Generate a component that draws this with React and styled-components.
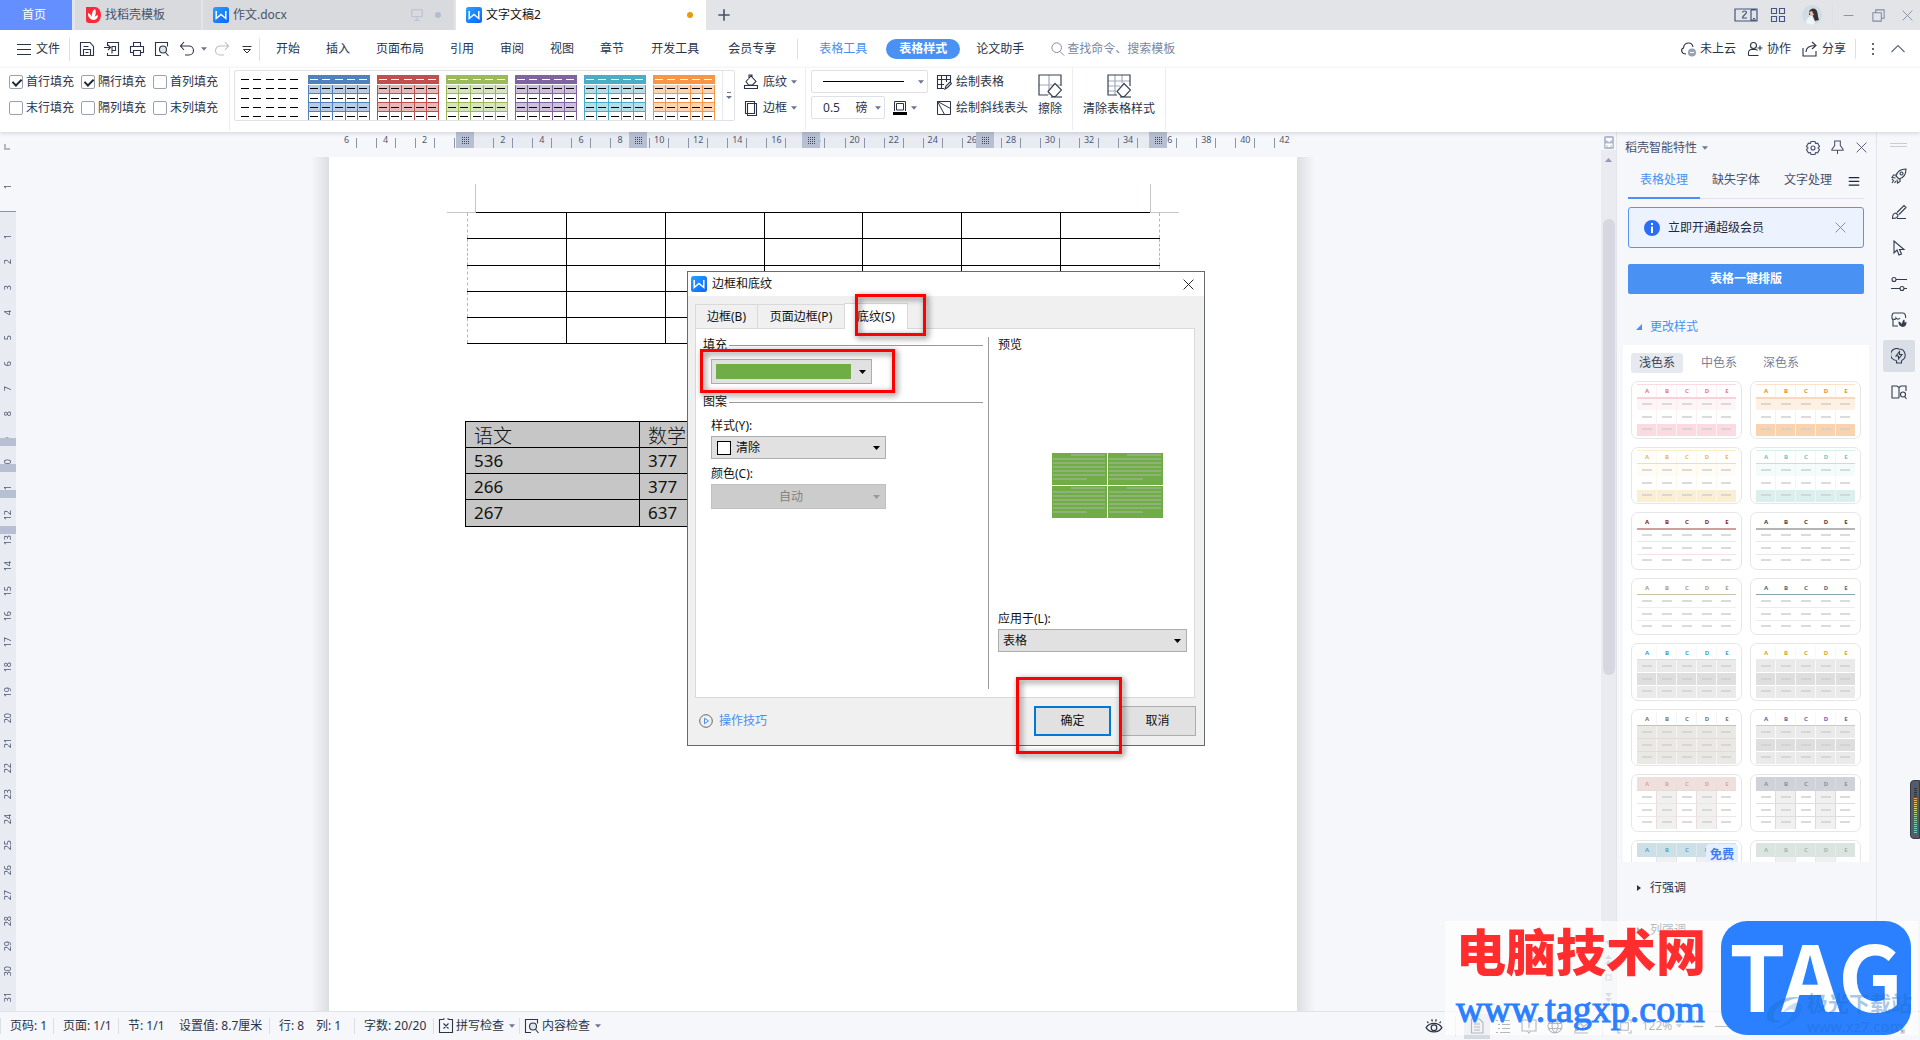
import React from "react";
import styled, { createGlobalStyle } from "styled-components";

const GlobalStyle = createGlobalStyle`
    * {
        box-sizing: border-box;
    }
    body {
        margin: 0;
        overflow: hidden;
        font-family: "Noto Sans", "Noto Sans CJK SC", sans-serif;
        font-size: 12px;
        line-height: 16px;
        color: #2b3347;
        background: #f5f7fa;
    }
    button, input, select {
        font: inherit;
        color: inherit;
        margin: 0;
        padding: 0;
        border: none;
        background: none;
    }
    select {
        appearance: none;
    }
    svg {
        display: block;
        flex: none;
    }
`;

/* ---------- icons ---------- */

const Icon = ({ d, size = 16, width = 1.1, children }) => (
    <svg
        width={size}
        height={size}
        viewBox="0 0 16 16"
        fill="none"
        stroke="currentColor"
        strokeWidth={width}
        aria-hidden="true"
    >
        {d && <path d={d} />}
        {children}
    </svg>
);

const Caret = ({ size = 7, color = "#6b7690" }) => (
    <svg width={size} height="4" viewBox="0 0 7 4" aria-hidden="true">
        <path d="M0 0h7L3.500 4z" fill={color} />
    </svg>
);

const paths = {
    menu: "M1 3.500h14M1 8.500h14M1 13.500h14",
    save: "M1.500 1.500h9.500l3.500 4v9h-13zM4.500 14.500V8.500h7v6M4.500 5.500h5M6.500 11.500h3",
    exportPdf: "M3.500 5V1.500h11v13h-11V12M0 6.500h6M4 4l2.500 2.500L4 9M8 12.500V5.500h3.500v4H8",
    print: "M4.500 5V1.500h7V5M4 11.500H1.500v-6h13v6H12M4.500 9.500h7v5h-7z",
    undo: "M5 1L1.500 5 5 9M1.500 5H10a4.500 4.500 0 010 9H6",
    redo: "M11 1l3.500 4L11 9M14.500 5H6a4.500 4.500 0 000 9h4",
    dropMore: "M3.500 5.500h9M4.500 8.500h7L8 12z",
    plus: "M8 1.500v13M1.500 8h13",
    close: "M2 2l12 12M14 2L2 14",
    minus: "M2 8h12",
    restore: "M5 5V2h9v9h-3M2 5h9v9H2z",
    grid: "M1.500 1.500h5v5h-5zM9.500 1.500h5v5h-5zM1.500 9.500h5v5h-5zM9.500 9.500h5v5h-5z",
    monitor: "M2 2h12v8H2zM8 10v4M5 14h6",
    share: "M1 7v8h13v-5M4 11c0-4 3-6.500 9-6.500M10 1l4 3.500L10 8",
    up: "M1.500 11L8 4.500 14.500 11",
    bucket: "M3 7.500L8 2l5 5.500L9.500 11h-4zM6 5V1h3v3M1.500 11.500h13v3h-13z",
    frame: "M2.500 1.500h9v12h-9zM4.500 3.500h9v12h-9z",
    pin: "M5 1h6v5l3 4v1H2v-1l3-4zM8 11v4",
    brush: "M6 14.500h9M1.500 14.500c0-3.500 1-5.500 3.500-5.500l2 2c0 2.500-2 3.500-5.500 3.500zM6 8.500L13 1.500 15 3.500 8 10.500",
    cursor: "M3 1v12l3-3 2 5 2.500-1-2-4.500H13z",
    list: "M1 2.500h2M5 2.500h10M3 6.500h2M7 6.500h8M3 10.500h2M7 10.500h8M1 14.500h2M5 14.500h10",
    book: "M1 2h5.500L8 3.500 9.500 2H15v11H9.500L8 15l-1.500-2H1zM8 3.500V10M8 11.500v1",
    globe: "M8 1a7 7 0 100 14A7 7 0 008 1zM8 1c-4 4-4 10 0 14M8 1c4 4 4 10 0 14M1.500 5.500h13M1.500 10.500h13",
    write: "M1 15h14M2 13l2-5 8-6 3 3-7 6zM5 9l3 2M8 6l3 3",
    fit: "M1 4V1h3M12 1h3v3M15 12v3h-3M4 15H1v-3M4 4h8v8H4z",
    expand: "M1 5V1h4M11 1h4v4M15 11v4h-4M5 15H1v-4M2 2l4 4M14 2l-4 4M2 14l4-4M14 14l-4-4",
    page: "M2.500 1h8L14 4.500V15H2.500zM5 6h6M5 9h6M5 12h6",
};

const WpsIcon = () => (
    <svg width="16" height="16" viewBox="0 0 16 16" aria-hidden="true">
        <defs>
            <linearGradient id="wps" x1="0" y1="0" x2="1" y2="1">
                <stop offset="0" stopColor="#2aa2ff" />
                <stop offset="1" stopColor="#0a64ff" />
            </linearGradient>
        </defs>
        <rect width="16" height="16" rx="2.500" fill="url(#wps)" />
        <path d="M3.200 4v7.500L8 7.500l4.800 4V4" fill="none" stroke="#fff" strokeWidth="1.500" />
    </svg>
);

const DocerIcon = () => (
    <svg width="16" height="16" viewBox="0 0 16 16" aria-hidden="true">
        <path d="M1 0h9a6 8 0 010 16H4a3 3 0 01-3-3z" fill="#fa2a3a" />
        <path d="M7.500 13C3 11 3 8 3 6c3 1 4 3 4.500 7zM7.500 13C6 8 7 4 10 2c1.500 3 1 7-2.500 11zM8 13c1-3 2-4 5-5 0 3-2 5-5 5z" fill="#fff" />
    </svg>
);

const InspectIcon = ({ size = 16 }) => (
    <Icon size={size} d="M5 14.500H1.500V1.500h12v4M5 14.500h2M11.500 11.500l3 3.500">
        <circle cx="9" cy="8.500" r="3.500" fill="#dfe3ea" />
    </Icon>
);

const EraserGridIcon = ({ dense }) => (
    <svg width="24" height="24" viewBox="0 0 24 24" fill="none" stroke="#3a4256" strokeWidth="1.200" aria-hidden="true">
        <path d={dense ? "M1 7h22M1 12h12M1 17h8M8 1v20M15 1v8" : "M1 11h22M11 1v20"} stroke="#a2a9b8" />
        <path d="M23 12V1H1v20h9" />
        <path d="M17 9.500l6.500 6.500-6 6.500h-3L10 17.500z" fill="#fff" />
        <path d="M13 23h11" />
    </svg>
);

/* ---------- title bar ---------- */

const Shell = styled.div`
    height: 100vh;
    display: flex;
    flex-direction: column;
    position: relative;
    overflow: hidden;
`;

const TitleBar = styled.header`
    display: flex;
    flex: none;
    height: 30px;
    background: #e2e4e8;
`;

const HomeTab = styled.button`
    width: 72px;
    margin-right: 3px;
    padding-right: 4px;
    color: #fff;
    background: #638fff;
`;

const FileTab = styled.button`
    display: flex;
    align-items: center;
    gap: 4px;
    width: ${props => props.$width}px;
    margin-right: 2px;
    padding: 0 10px;
    color: ${props => (props.$active ? "#111" : "#4a5266")};
    background: ${props => (props.$active ? "#fff" : "#d9dade")};
`;

const TabEnd = styled.span`
    display: flex;
    align-items: center;
    gap: 11px;
    margin-left: auto;
    padding-right: 3px;
    color: #b3bdd2;
`;

const Dot = styled.i`
    width: 6px;
    height: 6px;
    border-radius: 50%;
    background: ${props => props.$color};
`;

const PlainButton = styled.button`
    display: flex;
    align-items: center;
    justify-content: center;
    flex: none;
    gap: 4px;
    width: ${props => (props.$width ? `${props.$width}px` : "auto")};
    color: ${props => props.$color || "inherit"};
`;

const Spacer = styled.div`
    flex: 1;
`;

const Divider = styled.i`
    flex: none;
    align-self: center;
    width: 1px;
    height: ${props => props.$height || 20}px;
    margin: 0 ${props => props.$gap || 0}px;
    background: #dcdfe5;
`;

const Gap = styled.i`
    flex: none;
    width: ${props => props.$width}px;
`;

const Titles = () => (
    <TitleBar>
        <HomeTab>首页</HomeTab>
        <FileTab $width={126}>
            <DocerIcon />
            找稻壳模板
        </FileTab>
        <FileTab $width={251}>
            <WpsIcon />
            作文.docx
            <TabEnd>
                <Icon size={14} d={paths.monitor} />
                <Dot $color="#b3bdd2" />
            </TabEnd>
        </FileTab>
        <FileTab $width={250} $active>
            <WpsIcon />
            文字文稿2
            <TabEnd>
                <Dot $color="#e99a0c" />
            </TabEnd>
        </FileTab>
        <PlainButton $width={32} $color="#47506a" aria-label="新建">
            <Icon size={14} width={1.8} d={paths.plus} />
        </PlainButton>
        <Spacer />
        <PlainButton $width={36} $color="#47577c" aria-label="窗口">
            <svg width="24" height="14" viewBox="0 0 24 14" fill="none" stroke="currentColor" strokeWidth="1.200">
                <path d="M1 1h22v12H1zM17 2h5M17 2v10h5M19 10.500h2" />
                <path d="M8.500 4.500c0-2 4-2 4 0 0 1.500-4 3-4 5.500H13" />
            </svg>
        </PlainButton>
        <PlainButton $width={28} $color="#47577c" aria-label="应用">
            <Icon d={paths.grid} />
        </PlainButton>
        <PlainButton $width={40} aria-label="账号">
            <svg width="20" height="20" viewBox="0 0 20 20">
                <circle cx="10" cy="10" r="10" fill="#cfdde3" />
                <path d="M7 7c1-4 6-5 8-1 1 3 1 7 2 9l-4 1-3-7-3 1z" fill="#3b2f36" />
                <path d="M7 7l3-1 2 4-3 1z" fill="#e8bfae" />
                <path d="M4 18c0-4 3-7 6-7l3 8c-3 1-6 1-9-1z" fill="#eef5f8" />
            </svg>
        </PlainButton>
        <Divider $height={20} />
        <PlainButton $width={30} $color="#7d8aa8" aria-label="最小化">
            <Icon size={13} d={paths.minus} />
        </PlainButton>
        <PlainButton $width={31} $color="#7d8aa8" aria-label="还原">
            <Icon size={15} d={paths.restore} />
        </PlainButton>
        <PlainButton $width={26} $color="#7d8aa8" aria-label="关闭">
            <Icon size={13} d={paths.close} />
        </PlainButton>
    </TitleBar>
);

/* ---------- menu row ---------- */

const MenuBar = styled.nav`
    display: flex;
    align-items: center;
    flex: none;
    height: 38px;
    padding: 0 14px 0 16px;
    background: #fff;
`;

const MenuTab = styled.button`
    flex: none;
    padding: 0 13px;
    color: ${props => (props.$blue ? "#4a8ef0" : "#2b3347")};
`;

const Pill = styled.button`
    height: 20px;
    margin: 0 3px 0 6px;
    padding: 0 13px;
    border-radius: 10px;
    font-weight: bold;
    color: #fff;
    background: #4991f2;
`;

const SearchBox = styled.label`
    display: flex;
    align-items: center;
    gap: 2px;
    margin-left: 14px;
    color: #7c879e;

    input {
        width: 140px;
        outline: none;
    }
    input::placeholder {
        color: #7c879e;
        opacity: 1;
    }
`;

const tabNames = ["开始", "插入", "页面布局", "引用", "审阅", "视图", "章节"];

const Menu = () => (
    <MenuBar>
        <PlainButton>
            <Icon d={paths.menu} />
            文件
        </PlainButton>
        <Gap $width={9} />
        <Divider $height={23} />
        <Gap $width={4} />
        <PlainButton $width={25} aria-label="保存"><Icon d={paths.save} /></PlainButton>
        <PlainButton $width={25} aria-label="输出为PDF"><Icon d={paths.exportPdf} /></PlainButton>
        <PlainButton $width={25} aria-label="打印"><Icon d={paths.print} /></PlainButton>
        <PlainButton $width={25} aria-label="打印预览"><InspectIcon /></PlainButton>
        <PlainButton $width={25} aria-label="撤销"><Icon d={paths.undo} /></PlainButton>
        <PlainButton $width={10} aria-label="撤销列表"><Caret size={6} /></PlainButton>
        <PlainButton $width={25} $color="#b9bdc6" aria-label="恢复"><Icon d={paths.redo} /></PlainButton>
        <PlainButton $width={25} aria-label="更多"><Icon width={1} d={paths.dropMore} /></PlainButton>
        <Divider $height={23} />
        <Gap $width={3} />
        {tabNames.map(name => (
            <MenuTab key={name}>{name}</MenuTab>
        ))}
        <Gap $width={1} />
        <MenuTab>开发工具</MenuTab>
        <Gap $width={3} />
        <MenuTab>会员专享</MenuTab>
        <Divider $gap={8} />
        <MenuTab $blue>表格工具</MenuTab>
        <Pill>表格样式</Pill>
        <MenuTab>论文助手</MenuTab>
        <SearchBox>
            <Icon size={14} d="M10.500 11l4.500 4.500">
                <circle cx="6.500" cy="6.500" r="5.500" />
            </Icon>
            <input placeholder="查找命令、搜索模板" aria-label="查找命令" />
        </SearchBox>
        <Spacer />
        <PlainButton>
            <Icon d="M6 13C1 13 .500 8 3.500 7 4 1 12 0 13 6">
                <circle cx="12" cy="11.500" r="4" fill="#97a1b5" stroke="none" />
                <path d="M10 11.500h4" stroke="#fff" />
            </Icon>
            未上云
        </PlainButton>
        <Gap $width={11} />
        <PlainButton>
            <Icon d="M1.500 14.500v-3a3 3 0 013-3h4a3 3 0 012 1M1.500 14.500h10M10.500 7h5M13 4.500v5">
                <circle cx="6.500" cy="4.500" r="3" />
            </Icon>
            协作
        </PlainButton>
        <Gap $width={11} />
        <PlainButton>
            <Icon d={paths.share} />
            分享
        </PlainButton>
        <Divider $gap={9} />
        <PlainButton $width={16} aria-label="更多选项">
            <Icon>
                <g fill="#5c6780" stroke="none">
                    <rect x="7" y="2" width="2" height="2" />
                    <rect x="7" y="7" width="2" height="2" />
                    <rect x="7" y="12" width="2" height="2" />
                </g>
            </Icon>
        </PlainButton>
        <Gap $width={9} />
        <PlainButton $width={16} $color="#5c6780" aria-label="收起功能区">
            <Icon d={paths.up} />
        </PlainButton>
    </MenuBar>
);

/* ---------- ribbon ---------- */

const Ribbon = styled.section`
    display: flex;
    flex: none;
    position: relative;
    z-index: 1;
    height: 64px;
    padding: 0 9px;
    background: #fff;
    box-shadow: 0 1px 4px rgba(40, 50, 70, 0.18);
`;

const FillOptions = styled.div`
    display: grid;
    grid-template-columns: repeat(3, 72px);
    grid-auto-rows: 26px;
    width: 220px;
    padding-top: 1px;
`;

const CheckLabel = styled.label`
    display: flex;
    align-items: center;
    gap: 3px;
    white-space: nowrap;

    input {
        appearance: none;
        width: 14px;
        height: 14px;
        border: 1px solid #9aa1af;
        border-radius: 2px;
        background: #fff;
    }
    input:checked::after {
        content: "";
        display: block;
        width: 4px;
        height: 7px;
        margin: 1px 0 0 4px;
        border: solid #1f2738;
        border-width: 0 2px 2px 0;
        transform: rotate(45deg);
    }
`;

const Gallery = styled.div`
    display: flex;
    gap: 7px;
    height: 51px;
    margin: 2px 8px 0 4px;
    padding: 4px 0 0 4px;
    border: 1px solid #dfe1e6;
    border-radius: 2px;
    overflow: hidden;
`;

const GalleryMore = styled.button`
    display: flex;
    align-items: center;
    justify-content: center;
    width: 12px;
    margin-top: -4px;
    border-left: 1px solid #e6e8ec;
`;

const TableThumb = ({ color, tint }) => (
    <svg width="62" height="46" viewBox="0 0 62 46" shapeRendering="crispEdges" aria-hidden="true">
        {color && (
            <g>
                <rect width="62" height="9" fill={color} />
                <rect y="10" width="62" height="9" fill={tint} />
                <rect y="28" width="62" height="8" fill={tint} />
                <path d="M0 18.500h62M0 27.500h62M0 36.500h62" stroke={color} />
                <path d="M.500 10v36M12.500 10v36M24.500 10v36M37.500 10v36M49.500 10v36M61.500 10v36" stroke={color} />
            </g>
        )}
        {[4, 13, 23, 32, 41].map((y, row) =>
            [2, 14, 27, 39, 51].map(x => (
                <rect key={`${x}-${y}`} x={x} y={y} width="8" height="1" fill={color && row === 0 ? "#fff" : "#000"} />
            ))
        )}
    </svg>
);

const Stack = styled.div`
    display: flex;
    flex-direction: column;
    gap: ${props => props.$gap || 10}px;
    padding: ${props => props.$pad || "6px 8px 0 0"};
`;

const ToolButton = styled.button`
    display: flex;
    align-items: center;
    gap: 4px;
    height: 16px;
    white-space: nowrap;
`;

const BigTool = styled.button`
    display: flex;
    flex-direction: column;
    align-items: center;
    justify-content: flex-start;
    gap: 3px;
    padding: 6px 10px 0;
    height: 58px;
`;

const Row = styled.div`
    display: flex;
    align-items: center;
    gap: 8px;
`;

const RibbonSelect = styled.label`
    display: grid;
    align-items: center;
    width: ${props => props.$width}px;
    height: 23px;
    border: 1px solid #dfe1e6;
    border-radius: 2px;

    > * {
        grid-area: 1 / 1;
    }
    > select {
        width: 100%;
        height: 100%;
        padding-left: 11px;
        outline: none;
    }
    > svg {
        justify-self: end;
        margin-right: 3px;
        pointer-events: none;
    }
    > hr {
        width: 81px;
        margin: 0 0 0 11px;
        border: none;
        border-top: 1px solid #000;
    }
`;

const RibbonDivider = styled.i`
    width: 1px;
    height: 62px;
    margin-right: ${props => props.$after || 0}px;
    background: #ebedf0;
`;

const tableColors = [
    [null, null],
    ["#4f81bd", "#b8cce4"],
    ["#c0504d", "#e6b8b7"],
    ["#9bbb59", "#d8e4bc"],
    ["#8064a2", "#ccc0da"],
    ["#4bacc6", "#b7dee8"],
    ["#f79646", "#fcd5b4"],
];

const fillOptions = [
    ["首行填充", true],
    ["隔行填充", true],
    ["首列填充", false],
    ["末行填充", false],
    ["隔列填充", false],
    ["末列填充", false],
];

const Tools = () => (
    <Ribbon>
        <FillOptions>
            {fillOptions.map(([name, on]) => (
                <CheckLabel key={name}>
                    <input type="checkbox" defaultChecked={on} />
                    {name}
                </CheckLabel>
            ))}
        </FillOptions>
        <RibbonDivider />
        <Gallery>
            {tableColors.map(([color, tint]) => (
                <TableThumb key={color} color={color} tint={tint} />
            ))}
            <GalleryMore aria-label="更多样式">
                <svg width="6" height="8" viewBox="0 0 6 8">
                    <path d="M1 0h4v1H1zM0 4h6L3 7z" fill="#6b7690" />
                </svg>
            </GalleryMore>
        </Gallery>
        <Stack>
            <ToolButton>
                <Icon d={paths.bucket} />
                底纹
                <Caret size={6} />
            </ToolButton>
            <ToolButton>
                <Icon d={paths.frame} />
                边框
                <Caret size={6} />
            </ToolButton>
        </Stack>
        <RibbonDivider $after={5} />
        <Stack $gap={3} $pad="2px 8px 0 0">
            <RibbonSelect $width={117}>
                <select aria-label="线型" />
                <hr />
                <Caret size={6} />
            </RibbonSelect>
            <Row>
                <RibbonSelect $width={74}>
                    <select aria-label="线宽">
                        <option>0.5&nbsp;&nbsp;&nbsp;&nbsp;&nbsp;磅</option>
                    </select>
                    <Caret size={6} />
                </RibbonSelect>
                <ToolButton aria-label="边框颜色">
                    <svg width="14" height="15" viewBox="0 0 14 15">
                        <path d="M1.500 11V1.500h11V11M3.500 10V3.500h7V10z" fill="none" stroke="#2b3347" />
                        <rect y="12" width="14" height="3" />
                    </svg>
                    <Caret size={6} />
                </ToolButton>
            </Row>
        </Stack>
        <Stack $pad="6px 0 0 0">
            <ToolButton>
                <Icon d="M8 14.500H1.500v-13h13V8M1.500 5.500h13M1.500 10.500H8M5.500 1v14M10.500 1v7M9 15l1-3 4-4 1.500 1.500-4 4z" />
                绘制表格
            </ToolButton>
            <ToolButton>
                <Icon width={1} d="M1.500 1.500h13v13h-13zM1.500 1.500l13 7M1.500 1.500l7 13" />
                绘制斜线表头
            </ToolButton>
        </Stack>
        <BigTool>
            <EraserGridIcon />
            擦除
        </BigTool>
        <RibbonDivider />
        <BigTool>
            <EraserGridIcon dense />
            清除表格样式
        </BigTool>
        <RibbonDivider />
    </Ribbon>
);

/* ---------- document area ---------- */

const Workspace = styled.main`
    display: flex;
    flex: 1;
    min-height: 0;
`;

const DocColumn = styled.div`
    display: flex;
    flex-direction: column;
    flex: 1;
    min-width: 0;
`;

const RulerRow = styled.div`
    display: flex;
    justify-content: center;
    flex: none;
    height: 25px;
    padding-left: 25px;
    font-size: 9px;
    line-height: 15px;
    color: #4d5870;
`;

const RulerTrack = styled.div`
    display: grid;
    grid-template-columns: repeat(25, 1fr);
    position: relative;
    width: 1004px;
    height: 16px;
    padding: 0 11px 0 16px;
    background: linear-gradient(#e8ebf1, #e8ebf1) 146px 0 / 710px 16px no-repeat;
`;

const RulerCell = styled.span`
    display: flex;
    justify-content: center;
    align-items: flex-start;

    &::before,
    &::after {
        content: "";
        flex: none;
        width: 1px;
        height: 10px;
        margin-top: 6px;
        background: #8a94aa;
    }
    &:first-child::before,
    &:nth-child(25)::after {
        background: none;
    }
    b {
        width: 18px;
        font-weight: normal;
        text-align: center;
    }
`;

const ColumnStop = styled.i`
    position: absolute;
    top: 0;
    left: ${props => props.$left}px;
    width: 18px;
    height: 16px;
    padding: 4px 5px;
    background: #b7bfd2;

    &::after {
        content: "";
        display: block;
        width: 8px;
        height: 8px;
        background: repeating-linear-gradient(90deg, #b7bfd2 0 1px, transparent 1px 2px),
            repeating-linear-gradient(#b7bfd2 0 1px, #3d465c 1px 2px);
    }
`;

const DocRow = styled.div`
    display: flex;
    flex: 1;
    min-height: 0;
`;

const SideRuler = styled.div`
    display: flex;
    flex-direction: column;
    flex: none;
    width: 16px;
    font-size: 9px;
    line-height: 16px;
    color: #4d5870;
`;

const SideRulerTop = styled.div`
    display: flex;
    align-items: center;
    justify-content: center;
    height: 55px;
    padding-top: 6px;
    border-bottom: 1px solid #8a94aa;
`;

const SideRulerBody = styled.div`
    display: grid;
    grid-auto-rows: 1fr;
    flex: 1;
    position: relative;
    padding: 12px 0 1px;
    background: #e8ebf1;
`;

const SideNumber = styled.span`
    display: flex;
    align-items: center;
    justify-content: center;
    min-height: 0;
    writing-mode: vertical-rl;
    transform: rotate(180deg);
`;

const RowStop = styled.i`
    position: absolute;
    left: 0;
    top: ${props => props.$top}px;
    width: 16px;
    height: 8px;
    background: #b7bfd2;
`;

const TabCorner = styled.i`
    position: absolute;
    left: 4px;
    top: 144px;
    width: 6px;
    height: 6px;
    border: solid #b3b7c0;
    border-width: 0 0 2px 2px;
`;

const Canvas = styled.div`
    display: flex;
    justify-content: center;
    flex: 1;
    min-width: 0;
    padding-left: 9px;
`;

const PageFrame = styled.div`
    flex: none;
    padding: 0 18px;
    background: linear-gradient(90deg, transparent, #dcdee1) left / 18px 100% no-repeat,
        linear-gradient(270deg, transparent, #dcdee1) right / 18px 100% no-repeat;
`;

const Page = styled.article`
    position: relative;
    width: 968px;
    height: 100%;
    padding: 27px 118px 0;
    background: #fff;
`;

const Margins = styled.div`
    display: flex;
    justify-content: space-between;
    height: 28px;

    i {
        width: 29px;
        border: solid #c4c6ca;
        border-width: 0 1px 1px 0;
        height: 29px;
    }
    i + i {
        border-width: 0 0 1px 1px;
    }
`;

const BlankTable = styled.table`
    width: 693px;
    margin: 0 0 77px 20px;
    border-collapse: collapse;
    table-layout: fixed;
    border-left: 1px dashed #b8b8b8;
    border-right: 1px dashed #b8b8b8;

    td {
        height: 26px;
        padding: 0;
        border: solid #000;
        border-width: 1px 0;
    }
    tr:nth-child(2) td {
        height: 27px;
    }
    td + td {
        border-left-width: 1px;
    }
`;

const ScoreTable = styled.table`
    width: 697px;
    margin-left: 18px;
    border-collapse: collapse;
    table-layout: fixed;
    font-size: 17px;
    line-height: 24px;
    color: #111;
    background: #c6c6c6;

    th,
    td {
        height: 26px;
        padding: 0 0 0 8px;
        border: 1px solid #000;
        text-align: left;
    }
    th {
        font-size: 19px;
        font-weight: 300;
        font-family: "Noto Sans CJK SC", sans-serif;
    }
    tr:last-child td {
        height: 27px;
    }
`;

const ScrollColumn = styled.div`
    display: flex;
    flex-direction: column;
    align-items: center;
    flex: none;
    width: 15px;
    padding-top: 4px;
`;

const ScrollTrack = styled.div`
    display: flex;
    flex-direction: column;
    align-items: center;
    flex: 1;
    width: 15px;
    margin-top: 1px;
    padding: 8px 0 6px;
    color: #8f9ab3;
    background: #e9ebf0;
`;

const Thumb = styled.div`
    width: 12px;
    height: 456px;
    margin: 57px 0 auto;
    border-radius: 6px;
    background: #d5d8e0;
`;

const scores = [
    ["536", "377"],
    ["266", "377"],
    ["267", "637"],
];

const rulerNumbers = Array.from({ length: 25 }, (_, i) => Math.abs(i * 2 - 6));
const rowNumbers = Array.from({ length: 31 }, (_, i) => i + 1);

/* ---------- borders and shading dialog ---------- */

const Dialog = styled.section`
    position: absolute;
    left: 358px;
    top: 114px;
    display: flex;
    flex-direction: column;
    width: 518px;
    height: 475px;
    border: 1px solid #666a70;
    color: #111;
    background: #f0f0f0;
`;

const DialogTitle = styled.header`
    display: flex;
    align-items: center;
    gap: 5px;
    flex: none;
    height: 24px;
    padding: 0 9px 0 3px;
    background: #fff;

    button {
        margin-left: auto;
    }
`;

const DialogTabs = styled.div`
    display: flex;
    align-items: flex-end;
    flex: none;
    height: 33px;
    padding-left: 7px;
    margin-bottom: -1px;
    z-index: 1;
`;

const DialogTab = styled.button`
    width: ${props => props.$width}px;
    height: ${props => (props.$active ? 26 : 24)}px;
    margin-bottom: ${props => (props.$active ? 0 : 1)}px;
    margin-right: -1px;
    border: 1px solid #d9d9d9;
    border-bottom: none;
    background: ${props => (props.$active ? "#fff" : "#f0f0f0")};
`;

const DialogBody = styled.div`
    display: flex;
    flex: none;
    height: 370px;
    margin: 0 9px 0 7px;
    padding: 8px 0;
    border: 1px solid #d9d9d9;
    background: #fff;
`;

const ShadingPane = styled.div`
    flex: none;
    width: 293px;
    padding: 0 5px 0 7px;
    border-right: 1px solid #9a9a9a;
`;

const PreviewPane = styled.div`
    display: flex;
    flex-direction: column;
    flex: 1;
    padding: 0 6px 30px 9px;
`;

const GroupTitle = styled.h3`
    display: flex;
    align-items: center;
    gap: 2px;
    margin: 0;
    font-size: 12px;
    font-weight: normal;

    &::after {
        content: "";
        flex: 1;
        height: 1px;
        background: ${props => (props.$plain ? "none" : "#9a9a9a")};
    }
`;

const Group = styled.div`
    padding: ${props => props.$pad};
`;

const FieldLabel = styled.label`
    display: block;
    margin-bottom: 2px;
`;

const Field = styled.div`
    display: grid;
    align-items: center;
    width: ${props => props.$width}px;
    height: ${props => props.$height || 23}px;
    margin-bottom: 7px;
    border: 1px solid ${props => (props.$disabled ? "#c0c0c0" : "#adadad")};
    color: ${props => (props.$disabled ? "#838383" : "#111")};
    background: ${props => (props.$disabled ? "#cccccc" : "#e1e1e1")};

    > * {
        grid-area: 1 / 1;
    }
    select {
        width: 100%;
        height: 100%;
        padding-left: ${props => props.$indent || 4}px;
        outline: none;
        opacity: 1;
    }
    > svg {
        justify-self: end;
        margin-right: 5px;
        pointer-events: none;
    }
`;

const Swatch = styled.i`
    width: ${props => (props.$small ? 14 : 135)}px;
    height: ${props => (props.$small ? 14 : 15)}px;
    margin-left: ${props => (props.$small ? 5 : 4)}px;
    border: ${props => (props.$small ? "1px solid #000" : "none")};
    background: ${props => props.$color};
    pointer-events: none;
`;

const Preview = styled.svg`
    align-self: flex-end;
    margin: 100px 24px auto 0;
`;

const DialogFooter = styled.footer`
    display: flex;
    align-items: center;
    gap: 8px;
    padding: 8px 8px 0 11px;
`;

const TipLink = styled.a`
    display: flex;
    align-items: center;
    gap: 6px;
    margin-right: auto;
    color: #4a8ef0;
    text-decoration: none;
`;

const DialogButton = styled.button`
    width: 77px;
    height: 30px;
    border: ${props => (props.$primary ? "2px solid #0078d7" : "1px solid #adadad")};
    background: #e1e1e1;
`;

const RedBox = styled.i`
    position: absolute;
    left: ${props => props.$left}px;
    top: ${props => props.$top}px;
    width: ${props => props.$width}px;
    height: ${props => props.$height}px;
    border: 3px solid #f00;
    filter: drop-shadow(2px 2px 3px rgba(0, 0, 0, 0.6));
    pointer-events: none;
    z-index: 2;
`;

const PreviewCell = ({ x, y }) => (
    <g transform={`translate(${x} ${y})`}>
        <rect width="55" height="32" fill="#70ad47" />
        <path d="M19 2h34M1 6h52M1 10h52M1 14h52M1 18h52M1 22h52M1 26h34" stroke="#8fb377" strokeWidth="2" />
    </g>
);

const BordersDialog = () => (
    <Dialog role="dialog" aria-label="边框和底纹">
        <DialogTitle>
            <WpsIcon />
            边框和底纹
            <PlainButton $width={13} aria-label="关闭">
                <Icon size={13} d={paths.close} />
            </PlainButton>
        </DialogTitle>
        <DialogTabs>
            <DialogTab $width={63}>边框(B)</DialogTab>
            <DialogTab $width={88}>页面边框(P)</DialogTab>
            <DialogTab $width={64} $active>底纹(S)</DialogTab>
        </DialogTabs>
        <DialogBody>
            <ShadingPane>
                <GroupTitle>填充</GroupTitle>
                <Group $pad="6px 8px 3px">
                    <Field $width={161} $height={25}>
                        <select aria-label="填充" />
                        <Swatch $color="#70ad47" />
                        <Caret color="#000" />
                    </Field>
                </Group>
                <GroupTitle>图案</GroupTitle>
                <Group $pad="8px 8px 0">
                    <FieldLabel htmlFor="pattern">样式(Y):</FieldLabel>
                    <Field $width={175} $indent={24}>
                        <select id="pattern">
                            <option>清除</option>
                        </select>
                        <Swatch $small $color="#fff" />
                        <Caret color="#000" />
                    </Field>
                    <FieldLabel htmlFor="tone">颜色(C):</FieldLabel>
                    <Field $width={175} $height={25} $indent={67} $disabled>
                        <select id="tone" disabled>
                            <option>自动</option>
                        </select>
                        <Caret color="#9a9a9a" />
                    </Field>
                </Group>
            </ShadingPane>
            <PreviewPane>
                <GroupTitle $plain>预览</GroupTitle>
                <Preview width="112" height="65" viewBox="0 0 112 65">
                    <PreviewCell x={0} y={0} />
                    <PreviewCell x={56} y={0} />
                    <PreviewCell x={0} y={33} />
                    <PreviewCell x={56} y={33} />
                </Preview>
                <FieldLabel htmlFor="applyTo">应用于(L):</FieldLabel>
                <Field $width={189}>
                    <select id="applyTo">
                        <option>表格</option>
                    </select>
                    <Caret color="#000" />
                </Field>
            </PreviewPane>
        </DialogBody>
        <DialogFooter>
            <TipLink href="#tips">
                <svg width="14" height="14" viewBox="0 0 14 14" fill="none">
                    <circle cx="7" cy="7" r="6.300" stroke="#666" />
                    <path d="M5.500 4.200L9.500 7l-4 2.800z" stroke="#4a8ef0" />
                </svg>
                操作技巧
            </TipLink>
            <DialogButton $primary>确定</DialogButton>
            <DialogButton>取消</DialogButton>
        </DialogFooter>
        <RedBox $left={167} $top={22} $width={71} $height={42} />
        <RedBox $left={12} $top={77} $width={195} $height={44} />
        <RedBox $left={328} $top={405} $width={106} $height={77} />
    </Dialog>
);

const DocumentArea = () => (
    <>
        <DocColumn>
            <RulerRow>
                <RulerTrack>
                    {rulerNumbers.map((n, i) => (
                        <RulerCell key={i}>
                            <b>{n || ""}</b>
                        </RulerCell>
                    ))}
                    {[145, 318, 491, 665, 838].map(left => (
                        <ColumnStop key={left} $left={left} />
                    ))}
                </RulerTrack>
            </RulerRow>
            <DocRow>
                <SideRuler>
                    <SideRulerTop>
                        <SideNumber>1</SideNumber>
                    </SideRulerTop>
                    <SideRulerBody>
                        {rowNumbers.map(n => (
                            <SideNumber key={n}>{n}</SideNumber>
                        ))}
                        {[226, 252, 278, 314].map(top => (
                            <RowStop key={top} $top={top} />
                        ))}
                    </SideRulerBody>
                </SideRuler>
                <Canvas>
                    <PageFrame>
                        <Page>
                            <Margins>
                                <i />
                                <i />
                            </Margins>
                            <BlankTable>
                                <tbody>
                                    {[0, 1, 2, 3, 4].map(row => (
                                        <tr key={row}>
                                            {[0, 1, 2, 3, 4, 5, 6].map(col => (
                                                <td key={col} />
                                            ))}
                                        </tr>
                                    ))}
                                </tbody>
                            </BlankTable>
                            <ScoreTable>
                                <thead>
                                    <tr>
                                        <th>语文</th>
                                        <th>数学</th>
                                        <th />
                                        <th />
                                    </tr>
                                </thead>
                                <tbody>
                                    {scores.map(([a, b]) => (
                                        <tr key={a}>
                                            <td>{a}</td>
                                            <td>{b}</td>
                                            <td />
                                            <td />
                                        </tr>
                                    ))}
                                </tbody>
                            </ScoreTable>
                            <BordersDialog />
                        </Page>
                    </PageFrame>
                </Canvas>
            </DocRow>
        </DocColumn>
        <ScrollColumn>
            <svg width="10" height="13" viewBox="0 0 10 13">
                <rect width="10" height="13" rx="1.500" fill="#b3bbd0" />
                <path d="M2 2h6v2L5 6 2 4zM1.500 7.500h7V11h-1V9h-1v2h-3V9h-1v2h-1z" fill="#fff" />
            </svg>
            <ScrollTrack>
                <svg width="7" height="4" viewBox="0 0 7 4">
                    <path d="M0 4h7L3.500 0z" fill="currentColor" />
                </svg>
                <Thumb />
                <svg width="7" height="64" viewBox="0 0 7 64" fill="currentColor">
                    <path d="M0 0h7L3.500 4zM0 18h7L3.500 14zM0 23h7L3.500 19zM0 52h7L3.500 56zM0 57h7L3.500 61z" />
                    <rect x="1" y="34" width="5" height="5" fill="none" stroke="currentColor" />
                </svg>
            </ScrollTrack>
        </ScrollColumn>
    </>
);

/* ---------- side panel ---------- */

const Panel = styled.aside`
    flex: none;
    width: 260px;
    border-left: 1px solid #e2e4ea;
    color: #47506a;
`;

const PanelHeader = styled.header`
    display: flex;
    align-items: center;
    height: 31px;
    padding: 0 6px 0 8px;
    gap: 5px;
`;

const PanelTabs = styled.div`
    display: flex;
    align-items: stretch;
    height: 36px;
    margin: 0 12px 8px 11px;
    border-bottom: 1px solid #e0e3e9;
`;

const PanelTab = styled.button`
    width: 72px;
    margin-bottom: -1px;
    border-bottom: 2px solid ${props => (props.$active ? "#4991f2" : "transparent")};
    color: ${props => (props.$active ? "#4991f2" : "#47506a")};
`;

const Banner = styled.div`
    display: flex;
    align-items: center;
    gap: 8px;
    height: 41px;
    margin: 0 12px 16px 11px;
    padding: 0 16px 0 15px;
    border: 1px solid #5a93f5;
    border-radius: 3px;
    color: #1f2738;
    background: #edf3fe;
`;

const WideButton = styled.button`
    display: block;
    width: 236px;
    height: 30px;
    margin: 0 0 20px 11px;
    border-radius: 2px;
    font-weight: bold;
    color: #fff;
    background: #4991f2;
`;

const Section = styled.button`
    display: flex;
    align-items: center;
    gap: 8px;
    height: ${props => props.$height}px;
    margin-bottom: ${props => props.$after || 0}px;
    padding-left: 19px;
    color: ${props => props.$color};
`;

const StyleBox = styled.div`
    height: 517px;
    margin: 0 7px 5px 6px;
    padding: 8px 8px 0;
    overflow: hidden;
    background: #fff;
`;

const ToneTabs = styled.div`
    display: flex;
    gap: 10px;
    margin-bottom: 8px;
`;

const ToneTab = styled.button`
    width: 52px;
    height: 20px;
    border-radius: 3px;
    color: ${props => (props.$active ? "#3c4458" : "#77829a")};
    background: ${props => (props.$active ? "#e6e9ef" : "none")};
`;

const CardGrid = styled.div`
    display: grid;
    grid-template-columns: repeat(2, 111px);
    grid-auto-rows: 1fr;
    gap: 8px;
    height: 516px;
`;

const Card = styled.button`
    display: flex;
    align-items: flex-start;
    justify-content: center;
    position: relative;
    padding-top: 2px;
    border: 1px solid #e6e6e6;
    border-radius: 7px;
    background: #fff;
`;

const FreeBadge = styled.span`
    position: absolute;
    top: 3px;
    right: 3px;
    padding: 3px 4px;
    border-radius: 4px 4px 0 0;
    font-weight: bold;
    color: #3f7df5;
    background: #e6effe;
`;

const StyleThumb = ({ letter, head, top, line, thick = 1, rows = [], sep, grid, striped }) => (
    <svg width="99" height="52" viewBox="0 0 99 52" aria-hidden="true">
        <g shapeRendering="crispEdges">
            {head && <rect width="99" height="13" fill={head} />}
            {rows.map((fill, i) => (
                <rect key={i} y={14 + i * 13} width="99" height="12" fill={fill} />
            ))}
            {striped && <path d="M20 13h19v39H20zM59 13h20v39H59z" fill="#f0f0f0" />}
            {grid && <path d="M19.500 0v52M39.500 0v52M59.500 0v52M79.500 0v52" stroke={grid} />}
            {sep && <path d="M0 26.500h99M0 39.500h99" stroke={sep} />}
            {top && <rect width="99" height="1" fill={top} />}
            <rect y="13" width="99" height={thick} fill={line} />
        </g>
        {["A", "B", "C", "D", "E"].map((name, i) => (
            <text key={name} x={10 + i * 20} y="9" textAnchor="middle" fontSize="6" fontWeight="bold" fill={letter}>
                {name}
            </text>
        ))}
        {[20, 33, 45].map(y => (
            <path key={y} d={`M5 ${y}h10M25 ${y}h10M45 ${y}h10M65 ${y}h10M84 ${y}h10`} stroke="#cfcfcf" strokeWidth="1.300" />
        ))}
    </svg>
);

const greys = ["#eaeaea", "#dedede", "#eaeaea"];

const cardStyles = [
    { letter: "#e8788c", top: "#fadbe0", line: "#f8d2d9", thick: 2, rows: ["#fef5f7", "#fff", "#fbdbe1"], grid: "#fdf0f2" },
    { letter: "#f08c2e", top: "#fbe3ca", line: "#f9d9b9", thick: 2, rows: ["#fef0e2", "#fff", "#f9d3ae"], grid: "#fdf0e4" },
    { letter: "#eebb3c", top: "#fbeecb", line: "#f7dfa2", rows: ["#fffcf6", "#fff", "#faefd2"], grid: "#fdf8ea" },
    { letter: "#6cc8c2", top: "#d7f0ee", line: "#b8e5e2", rows: ["#f4fbfb", "#fff", "#daf0ee"], grid: "#ecf8f7" },
    { letter: "#8e2323", line: "#cf9f9f", thick: 2, sep: "#f4e3e3" },
    { letter: "#444", line: "#b5b5b5", thick: 2, sep: "#e8e8e8" },
    { letter: "#b0a078", line: "#c9c0a6", sep: "#efefef" },
    { letter: "#3f7283", line: "#8ba8b1", sep: "#ececec" },
    { letter: "#4ba0c4", line: "#cfe3ed", rows: greys, grid: "#f8f8f8" },
    { letter: "#d0a838", line: "#f3ecd0", rows: greys, grid: "#f8f8f8" },
    { letter: "#777", line: "#cdbfb6", rows: ["#eae8e4", "#eae8e4", "#eae8e4"], sep: "#e0ddd8", grid: "#f5f4f2" },
    { letter: "#6f5cc0", line: "#cbc5e4", rows: greys, grid: "#f8f8f8" },
    { letter: "#d9aaa8", head: "#efe0de", line: "#e8dad8", sep: "#eee4e3", grid: "#eadfdd", striped: true },
    { letter: "#8e939f", head: "#cfd2d8", line: "#cfd2d8", sep: "#dddddd", grid: "#dcdcde", striped: true },
    { letter: "#6aa5b8", head: "#cde0e8", line: "#cde0e8", grid: "#dfe8ec", striped: true, free: true },
    { letter: "#a3bbb2", head: "#dae4e0", line: "#dae4e0", grid: "#e4eae8", striped: true },
];

const Triangle = ({ open }) => (
    <svg width="6" height="6" viewBox="0 0 6 6" aria-hidden="true">
        <path d={open ? "M6 0v6H0z" : "M1 0v6l4-3z"} fill="currentColor" />
    </svg>
);

const SidePanel = () => (
    <Panel>
        <PanelHeader>
            稻壳智能特性
            <Caret size={6} />
            <Spacer />
            <PlainButton $width={18} aria-label="设置">
                <Icon d="M6 1.500h4l.600 2 2-.300 1.900 3.300L13 8l1.500 1.500-1.900 3.300-2-.300-.600 2H6l-.600-2-2 .300-1.900-3.300L3 8 1.500 6.500l1.900-3.300 2 .300z">
                    <circle cx="8" cy="8" r="2" />
                </Icon>
            </PlainButton>
            <PlainButton $width={20} aria-label="固定"><Icon size={15} d={paths.pin} /></PlainButton>
            <PlainButton $width={18} aria-label="关闭"><Icon size={13} d={paths.close} /></PlainButton>
        </PanelHeader>
        <PanelTabs>
            <PanelTab $active>表格处理</PanelTab>
            <PanelTab>缺失字体</PanelTab>
            <PanelTab>文字处理</PanelTab>
            <PlainButton $width={20} $color="#1f2738" aria-label="全部">
                <Icon size={12} width={1.4} d={paths.menu} />
            </PlainButton>
        </PanelTabs>
        <Banner>
            <svg width="16" height="16" viewBox="0 0 16 16">
                <circle cx="8" cy="8" r="8" fill="#2a6ef8" />
                <path d="M7 3h2v2H7zM7 6.500h2V13H7z" fill="#fff" />
            </svg>
            立即开通超级会员
            <Spacer />
            <PlainButton $color="#77829a" aria-label="关闭提示"><Icon size={13} d={paths.close} /></PlainButton>
        </Banner>
        <WideButton>表格一键排版</WideButton>
        <Section $height={26} $after={5} $color="#4991f2">
            <Triangle open />
            更改样式
        </Section>
        <StyleBox>
            <ToneTabs>
                <ToneTab $active>浅色系</ToneTab>
                <ToneTab>中色系</ToneTab>
                <ToneTab>深色系</ToneTab>
            </ToneTabs>
            <CardGrid>
                {cardStyles.map(({ free, ...look }, i) => (
                    <Card key={i} aria-label={`样式${i + 1}`}>
                        <StyleThumb {...look} />
                        {free && <FreeBadge>免费</FreeBadge>}
                    </Card>
                ))}
            </CardGrid>
        </StyleBox>
        <Section $height={42} $color="#2b3347">
            <Triangle />
            行强调
        </Section>
        <Section $height={42} $color="#2b3347">
            <Triangle />
            列强调
        </Section>
    </Panel>
);

const Rail = styled.nav`
    display: flex;
    flex-direction: column;
    align-items: center;
    flex: none;
    gap: 4px;
    width: 44px;
    padding-top: 11px;
    border-left: 1px solid #e0e3e9;
    color: #333c50;
`;

const Grip = styled.i`
    width: 17px;
    height: 4px;
    margin-bottom: 9px;
    border: solid #c9ccd3;
    border-width: 1px 0;
`;

const RailButton = styled.button`
    display: flex;
    align-items: center;
    justify-content: center;
    width: 32px;
    height: 32px;
    border-radius: 2px;
    background: ${props => (props.$active ? "#dadfe7" : "none")};
`;

const SideRail = () => (
    <Rail>
        <Grip />
        <RailButton aria-label="推荐">
            <Icon d="M5 8c1-4 4-7 10-7 0 6-3 9-7 10zM5.500 7H2.500L1 9.500l3.500.500M9 10.500v3L6.500 15 6 11.500M3 12l-2 3M5 13l-1.500 2M2 11l-1 1">
                <circle cx="10.500" cy="5.500" r="1.500" />
            </Icon>
        </RailButton>
        <RailButton aria-label="样式"><Icon d={paths.brush} /></RailButton>
        <RailButton aria-label="选择"><Icon d={paths.cursor} /></RailButton>
        <RailButton aria-label="属性">
            <Icon d="M5 3.500h11M0 12.500h9M13 12.500h3">
                <circle cx="3" cy="3.500" r="2" />
                <circle cx="11" cy="12.500" r="2" />
            </Icon>
        </RailButton>
        <RailButton aria-label="稻壳资源">
            <Icon d="M2 8v6h5M2 8C0 6 1 1 3 1h9c2 0 3 3 2.500 5M2 7c2 1 3 0 3-1 1 1.500 3 1.500 4 0">
                <path d="M11.500 15C8 14 7.500 12 7.500 9.500c2 .500 3 1.500 3.500 3 0-2 .500-4 2-5 .800 1 .800 2 .500 3l2-.500c0 3-1 4.500-4 5z" fill="currentColor" stroke="none" />
            </Icon>
        </RailButton>
        <RailButton $active aria-label="智能特性">
            <Icon d="M5.500 12.500A6 6 0 118 1a6 6 0 012.500 11.500M5.500 12.500V15h5v-2.500M8.500 3.500L5 8h2.500v3L11 6.500H8.500z" />
        </RailButton>
        <RailButton aria-label="查找">
            <Icon d="M8 14H1V2h5l2 1.500V14M8 3.500L10 2h5v5M13.500 12.500l2 2.500">
                <circle cx="12" cy="10.500" r="2.500" />
            </Icon>
        </RailButton>
    </Rail>
);

/* ---------- status bar ---------- */

const StatusBar = styled.footer`
    display: flex;
    align-items: center;
    flex: none;
    height: 29px;
    padding: 0 15px 0 0;
    border-top: 1px solid #dfe2e8;
    background: #f5f7fa;
`;

const StatusItem = styled.span`
    display: flex;
    align-items: center;
    gap: 2px;
    width: ${props => props.$width}px;
    padding-left: ${props => props.$pad || 9}px;
    border-left: 1px solid ${props => (props.$bare ? "transparent" : "#dcdfe5")};
    white-space: nowrap;

    svg:last-child:not(:first-child) {
        margin-left: 3px;
    }
`;

const ViewButton = styled.button`
    display: flex;
    align-items: center;
    justify-content: center;
    width: 26px;
    height: 25px;
    background: ${props => (props.$active ? "#d5dae2" : "none")};
`;

const Zoom = styled.input`
    appearance: none;
    width: 144px;
    height: 16px;
    margin: 0 6px;
    background: linear-gradient(#47506a, #47506a) center / 100% 1px no-repeat;

    &::-webkit-slider-thumb {
        appearance: none;
        width: 12px;
        height: 12px;
        border: 1px solid #47506a;
        border-radius: 50%;
        background: #f5f7fa;
    }
`;

const Status = () => (
    <StatusBar>
        <StatusItem $width={53}>页码: 1</StatusItem>
        <StatusItem $width={65}>页面: 1/1</StatusItem>
        <StatusItem $width={51}>节: 1/1</StatusItem>
        <StatusItem $width={100} $bare>设置值: 8.7厘米</StatusItem>
        <StatusItem $width={37}>行: 8</StatusItem>
        <StatusItem $width={48} $bare>列: 1</StatusItem>
        <StatusItem $width={79}>字数: 20/20</StatusItem>
        <StatusItem $width={86} $pad={4}>
            <Icon d="M5 1.500H1.500v13H5M11 1.500h3.500v13H11M5 1.500l1.500-1M11 1.500l-1.500-1M5 14.500h6M5.500 5.500l5 5M10.500 5.500l-5 5" />
            拼写检查
            <Caret size={6} />
        </StatusItem>
        <StatusItem $width={86} $pad={4}>
            <InspectIcon />
            内容检查
            <Caret size={6} />
        </StatusItem>
        <StatusItem $width={10} />
        <Spacer />
        <ViewButton aria-label="护眼模式">
            <Icon size={18} d="M1 9.500c3-5 11-5 14 0-3 5-11 5-14 0zM2 4l1 1.500M6 2l.500 2M10 2l-.500 2M14 4l-1 1.500">
                <circle cx="8" cy="9.500" r="2.500" />
            </Icon>
        </ViewButton>
        <Divider $gap={8} />
        <ViewButton $active aria-label="页面视图"><Icon d={paths.page} /></ViewButton>
        <ViewButton aria-label="大纲"><Icon d={paths.list} /></ViewButton>
        <ViewButton aria-label="阅读版式"><Icon d={paths.book} /></ViewButton>
        <ViewButton aria-label="Web版式"><Icon d={paths.globe} /></ViewButton>
        <ViewButton aria-label="写作模式"><Icon d={paths.write} /></ViewButton>
        <Divider $gap={8} />
        <ViewButton aria-label="最佳缩放"><Icon size={15} d={paths.fit} /></ViewButton>
        <PlainButton $width={50}>
            122%
            <Caret size={6} />
        </PlainButton>
        <PlainButton $width={22} aria-label="缩小"><Icon size={13} width={1.6} d={paths.minus} /></PlainButton>
        <Zoom type="range" min="0" max="100" defaultValue="50" aria-label="显示比例" />
        <PlainButton $width={12} aria-label="放大"><Icon size={12} width={1.8} d={paths.plus} /></PlainButton>
        <Gap $width={12} />
        <PlainButton aria-label="全屏"><Icon d={paths.expand} /></PlainButton>
    </StatusBar>
);

/* ---------- overlays ---------- */

const SiteMark = styled.div`
    position: absolute;
    right: 2px;
    bottom: 5px;
    z-index: 3;
    display: flex;
    justify-content: space-between;
    width: 473px;
    height: 114px;
    padding-right: 7px;
    background: rgba(255, 255, 255, 0.65);
    pointer-events: none;
`;

const SiteName = styled.div`
    padding-left: 11px;
    white-space: nowrap;

    strong {
        display: block;
        font-family: "Noto Sans CJK SC", sans-serif;
        font-size: 50px;
        line-height: 56px;
        font-weight: 900;
        color: #ff2d2d;
    }
    span {
        display: block;
        margin-top: 10px;
        font-family: "Liberation Serif", serif;
        font-size: 38px;
        line-height: 44px;
        color: #2b80ff;
        -webkit-text-stroke: 1px #2b80ff;
    }
`;

const SiteLogo = styled.div`
    flex: none;
    width: 190px;
    border-radius: 26px;
    font-family: "Noto Sans CJK SC", sans-serif;
    font-size: 90px;
    line-height: 104px;
    font-weight: bold;
    text-align: center;
    color: #fff;
    background: #2b80ff;
`;

const SecondMark = styled.div`
    position: absolute;
    right: 8px;
    bottom: 4px;
    z-index: 4;
    display: flex;
    align-items: center;
    gap: 2px;
    color: rgba(24, 110, 200, 0.4);
    pointer-events: none;
    font-size: 15px;
    line-height: 20px;

    strong {
        display: block;
        font-size: 21px;
        line-height: 26px;
    }
`;

const Gadget = styled.div`
    position: absolute;
    right: 0;
    top: 780px;
    z-index: 3;
    width: 10px;
    height: 59px;
    padding: 7px 2px 7px 3px;
    border: 1px solid #363b48;
    border-radius: 4px 0 0 4px;
    background: #555b69;

    &::after {
        content: "";
        display: block;
        height: 45px;
        background: repeating-linear-gradient(transparent 0 1px, #555b69 1px 2px),
            linear-gradient(#2e323c 22%, #e8a852 23%, #dcd36a 45%, #8ed08a 65%, #62d2c8);
    }
`;

const App = () => (
    <Shell>
        <GlobalStyle />
        <Titles />
        <Menu />
        <Tools />
        <Workspace>
            <DocumentArea />
            <SidePanel />
            <SideRail />
        </Workspace>
        <Status />
        <TabCorner />
        <Gadget />
        <SiteMark>
            <SiteName>
                <strong>电脑技术网</strong>
                <span>www.tagxp.com</span>
            </SiteName>
            <SiteLogo>TAG</SiteLogo>
        </SiteMark>
        <SecondMark>
            <svg width="40" height="36" viewBox="0 0 42 36" fill="currentColor">
                <path d="M40 2C22-2 2 8 2 22c0 6 8 8 16 4-6 1-10-1-9-6C11 10 26 2 40 2z" />
                <path d="M38 8c4 10-6 22-30 27 10-4 20-10 22-18 1-5-6-3-12 2 6-10 16-14 20-11z" opacity=".6" />
            </svg>
            <div>
                <strong>极光下载站</strong>
                www.xz7.com
            </div>
        </SecondMark>
    </Shell>
);

export default App;
